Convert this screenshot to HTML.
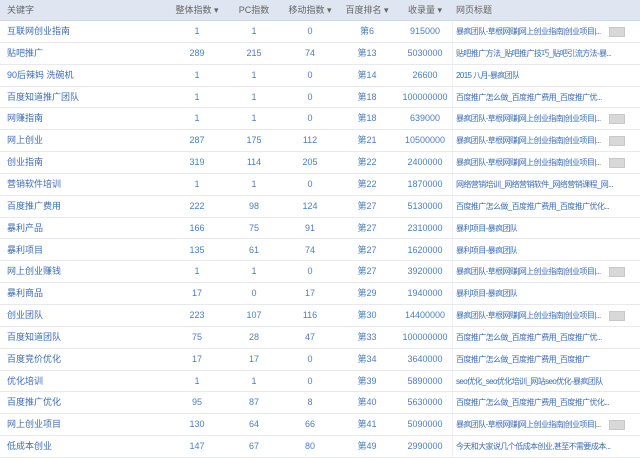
<!DOCTYPE html><html><head><meta charset="utf-8"><style>
body{margin:0;width:640px;height:458px;overflow:hidden;background:#fff;font-family:"Liberation Sans","Noto Sans CJK SC",sans-serif;font-size:9px;}
.r{position:absolute;left:0;width:640px;border-bottom:1px solid #e6e9ee;box-sizing:border-box;}
.h{background:#dfe6f1;color:#666;top:0;height:21px;border-bottom:1px solid #cfd8e6}
.c{position:absolute;top:0;line-height:21px;white-space:nowrap}
.k{left:7px;color:#3b6cb4}
.n{color:#4a7fc0;text-align:center;width:50px}
.t{left:456px;color:#3b6cb4;font-size:8px;letter-spacing:-0.6px;max-width:180px;overflow:hidden}
.h .c{color:#666}
.sep{position:absolute;left:452px;top:0;width:1px;height:458px;background:#edf0f4}
.b{display:inline-block;width:14px;height:8px;background:#d8d8d8;border:1px solid #c8c8c8;vertical-align:middle;margin-left:8px}
</style></head><body>
<div class="sep"></div>
<div class="r h"><div class="c k" style="color:#666">关键字</div><div class="c n" style="left:172px">整体指数 ▾</div><div class="c n" style="left:229px">PC指数</div><div class="c n" style="left:285px">移动指数 ▾</div><div class="c n" style="left:342px">百度排名 ▾</div><div class="c n" style="left:400px">收录量 ▾</div><div class="c t" style="color:#666;font-size:9px;letter-spacing:0">网页标题</div></div>
<div id="rows"></div>
<script>
var d=[["互联网创业指南",1,1,0,6,"915000",1],["贴吧推广",289,215,74,13,"5030000","贴吧推广方法_贴吧推广技巧_贴吧引流方法-暴..."],["90后辣妈 洗碗机",1,1,0,14,"26600","2015 八月-暴疯团队"],["百度知道推广团队",1,1,0,18,"100000000","百度推广怎么做_百度推广费用_百度推广优..."],["网赚指南",1,1,0,18,"639000",1],["网上创业",287,175,112,21,"10500000",1],["创业指南",319,114,205,22,"2400000",1],["营销软件培训",1,1,0,22,"1870000","网络营销培训_网络营销软件_网络营销课程_网..."],["百度推广费用",222,98,124,27,"5130000","百度推广怎么做_百度推广费用_百度推广优化..."],["暴利产品",166,75,91,27,"2310000","暴利项目-暴疯团队"],["暴利项目",135,61,74,27,"1620000","暴利项目-暴疯团队"],["网上创业赚钱",1,1,0,27,"3920000",1],["暴利商品",17,0,17,29,"1940000","暴利项目-暴疯团队"],["创业团队",223,107,116,30,"14400000",1],["百度知道团队",75,28,47,33,"100000000","百度推广怎么做_百度推广费用_百度推广优..."],["百度竞价优化",17,17,0,34,"3640000","百度推广怎么做_百度推广费用_百度推广"],["优化培训",1,1,0,39,"5890000","seo优化_seo优化培训_网站seo优化-暴疯团队"],["百度推广优化",95,87,8,40,"5630000","百度推广怎么做_百度推广费用_百度推广优化..."],["网上创业项目",130,64,66,41,"5090000",1],["低成本创业",147,67,80,49,"2990000","今天和大家说几个低成本创业,甚至不需要成本..."]];
var h="";d.forEach(function(x,i){var top=21+i*21.85;var t=x[6]===1?'暴疯团队-草根网赚|网上创业指南|创业项目|...<span class="b"></span>':x[6];
h+='<div class="r" style="top:'+top+'px;height:21.85px"><div class="c k">'+x[0]+'</div><div class="c n" style="left:172px">'+x[1]+'</div><div class="c n" style="left:229px">'+x[2]+'</div><div class="c n" style="left:285px">'+x[3]+'</div><div class="c n" style="left:342px">第'+x[4]+'</div><div class="c n" style="left:400px">'+x[5]+'</div><div class="c t">'+t+'</div></div>';});
document.getElementById("rows").innerHTML=h;
</script>
</body></html>
